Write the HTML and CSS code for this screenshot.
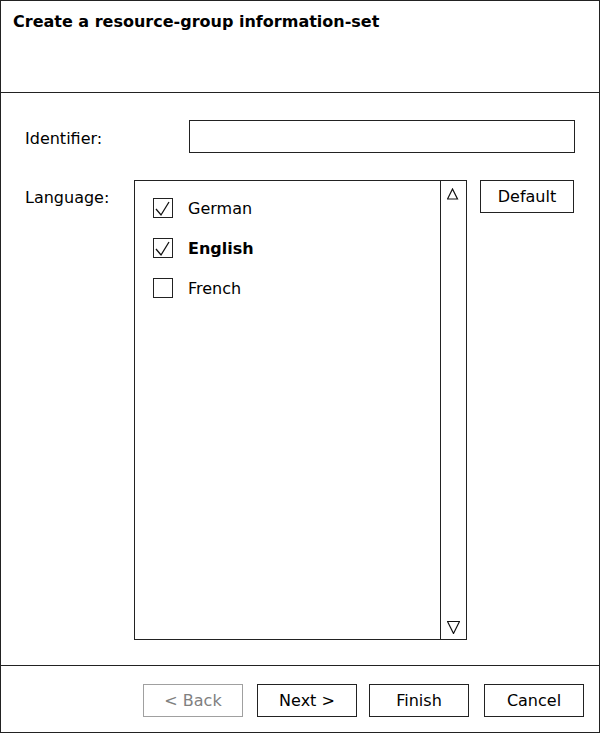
FILE: index.html
```html
<!DOCTYPE html>
<html>
<head>
<meta charset="utf-8">
<title>Create a resource-group information-set</title>
<link rel="stylesheet" href="styles.css">
</head>
<body>
<div class="dialog">
  <div class="dialog-header">
    <h1 class="dialog-title">Create a resource-group information-set</h1>
  </div>

  <div class="dialog-body">
    <div class="field-row">
      <label class="field-label identifier-label" for="identifier">Identifier:</label>
      <input class="text-input" id="identifier" type="text">
    </div>

    <div class="field-row language-row">
      <span class="field-label language-label">Language:</span>
      <div class="list-box">
        <ul class="choice-list">
          <li class="choice">
            <span class="checkbox"><svg width="18" height="18" viewBox="0 0 18 18"><polyline points="2,10 7,16 15,3" /></svg></span>
            German
          </li>
          <li class="choice choice-default">
            <span class="checkbox"><svg width="18" height="18" viewBox="0 0 18 18"><polyline points="2,10 7,16 15,3" /></svg></span>
            English
          </li>
          <li class="choice">
            <span class="checkbox"></span>
            French
          </li>
        </ul>
        <div class="scrollbar">
          <svg class="arrow" width="12" height="12" viewBox="0 0 12 12"><polygon points="5.5,1 10.5,11 0.5,11" /></svg>
          <svg class="arrow" width="13" height="13" viewBox="0 0 13 13"><polygon points="0.5,0.5 12.5,0.5 6.5,12.5" /></svg>
        </div>
      </div>
      <button class="btn default-btn">Default</button>
    </div>
  </div>

  <div class="dialog-footer">
    <button class="btn" disabled>&lt; Back</button>
    <button class="btn">Next &gt;</button>
    <button class="btn btn-finish">Finish</button>
    <button class="btn btn-cancel">Cancel</button>
  </div>
</div>
</body>
</html>
```

FILE: styles.css
```css
body {
  margin: 0;
  font-family: "DejaVu Sans", sans-serif;
  font-size: 16px;
  color: #000;
  background: #fff;
}
.dialog {
  width: 600px;
  height: 733px;
  box-sizing: border-box;
  border: 1px solid #222;
  display: flex;
  flex-direction: column;
}
.dialog-header {
  height: 92px;
  box-sizing: border-box;
  border-bottom: 1px solid #222;
  padding: 11px 12px 0 12px;
}
.dialog-title {
  margin: 0;
  font-size: 16px;
  font-weight: bold;
}
.dialog-body {
  flex: 1;
  padding: 27px 0 0 24px;
}
.field-row {
  display: flex;
  align-items: flex-start;
}
.field-label {
  flex: none;
}
.identifier-label {
  width: 164px;
  padding-top: 9px;
}
.text-input {
  width: 386px;
  height: 33px;
  box-sizing: border-box;
  margin: 0;
  border: 1px solid #222;
  border-radius: 0;
  font: inherit;
}
.language-row {
  margin-top: 27px;
}
.language-label {
  width: 109px;
  padding-top: 8px;
}
.list-box {
  width: 333px;
  height: 460px;
  box-sizing: border-box;
  border: 1px solid #222;
  display: flex;
}
.choice-list {
  flex: 1;
  list-style: none;
  margin: 0;
  padding: 17px 0 0 18px;
}
.choice {
  display: flex;
  align-items: center;
  gap: 15px;
  height: 20px;
  margin-bottom: 20px;
}
.choice-default {
  font-weight: bold;
}
.checkbox {
  width: 20px;
  height: 20px;
  box-sizing: border-box;
  border: 1px solid #222;
  flex: none;
}
.checkbox svg {
  display: block;
}
.checkbox polyline {
  fill: none;
  stroke: #111;
  stroke-width: 1.3;
}
.scrollbar {
  width: 26px;
  box-sizing: border-box;
  border-left: 1px solid #222;
  display: flex;
  flex-direction: column;
  justify-content: space-between;
  align-items: flex-start;
  padding: 7px 0 5px 6px;
}
.arrow {
  display: block;
}
.arrow polygon {
  fill: none;
  stroke: #111;
  stroke-width: 1.2;
}
.btn {
  width: 100px;
  height: 33px;
  box-sizing: border-box;
  margin: 0;
  padding: 0;
  border: 1px solid #222;
  border-radius: 0;
  background: #fff;
  color: #000;
  font: inherit;
}
.btn:disabled {
  border-color: #a0a0a0;
  color: #808080;
}
.default-btn {
  width: 94px;
  margin-left: 13px;
}
.dialog-footer {
  height: 67px;
  box-sizing: border-box;
  border-top: 1px solid #222;
  display: flex;
  justify-content: flex-end;
  align-items: flex-start;
  gap: 14px;
  padding: 18px 15px 0 0;
}
.btn-finish {
  margin-left: -2px;
}
.btn-cancel {
  margin-left: 1px;
}
```
